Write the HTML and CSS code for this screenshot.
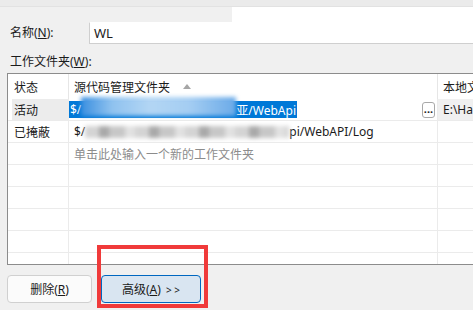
FILE: index.html
```html
<!DOCTYPE html>
<html lang="zh-CN">
<head>
  <meta charset="utf-8">
  <title>编辑工作区</title>
  <link rel="stylesheet" href="styles.css">
</head>
<body>
  <div class="dialog">
    <div class="band"></div>
    <div class="strip"><div class="strip-fill"></div></div>

    <div class="name-row">
      <label class="field-label">名称(<u>N</u>):</label>
      <div class="name-input">WL</div>
    </div>

    <div class="folder-label">工作文件夹(<u>W</u>):</div>

    <!-- 工作文件夹映射表 -->
    <div class="grid">
      <div class="row head">
        <div class="cell c1">状态</div>
        <div class="cell c2">源代码管理文件夹<span class="sort"></span></div>
        <div class="cell c3">本地文</div>
      </div>
      <div class="row">
        <div class="cell c1 current">活动</div>
        <div class="cell c2">
          <span class="picked">$/<span class="smudge smudge-blue"></span>亚/WebApi</span>
          <span class="more">···</span>
        </div>
        <div class="cell c3 shaded">E:\Ha</div>
      </div>
      <div class="row">
        <div class="cell c1">已掩蔽</div>
        <div class="cell c2">$/<span class="smudge smudge-grey"></span>pi/WebAPI/Log</div>
        <div class="cell c3"></div>
      </div>
      <div class="row">
        <div class="cell c1"></div>
        <div class="cell c2 hint">单击此处输入一个新的工作文件夹</div>
        <div class="cell c3"></div>
      </div>
      <div class="row"><div class="cell c1"></div><div class="cell c2"></div><div class="cell c3"></div></div>
      <div class="row"><div class="cell c1"></div><div class="cell c2"></div><div class="cell c3"></div></div>
      <div class="row"><div class="cell c1"></div><div class="cell c2"></div><div class="cell c3"></div></div>
      <div class="row"><div class="cell c1"></div><div class="cell c2"></div><div class="cell c3"></div></div>
      <div class="row"><div class="cell c1"></div><div class="cell c2"></div><div class="cell c3"></div></div>
    </div>

    <div class="actions">
      <button class="btn">删除(<u>R</u>)</button>
      <button class="btn btn-on">高级(<u>A</u>) <span class="arrows">&gt; &gt;</span></button>
    </div>

    <!-- cadre rouge d'annotation -->
    <div class="mark"></div>
  </div>
</body>
</html>
```

FILE: styles.css
```css
body {
  margin: 0;
  background: #f0f0f0;
  font-family: 'Noto Sans', 'Noto Sans CJK SC', sans-serif;
  font-size: 12px;
  color: #1b1b1b;
  overflow: hidden;
}

.dialog {
  position: relative;
  width: 473px;
  height: 310px;
  overflow: hidden;
}

.band {
  height: 6px;
  background: #ebebeb;
  border-bottom: 1px solid #e2e2e2;
}

.strip {
  display: flex;
  height: 15px;
}

.strip-fill {
  flex: 1;
  margin-left: 232px;
  background: #ffffff;
}

.name-row {
  display: flex;
  align-items: center;
  height: 22px;
}

.field-label {
  width: 89px;
  padding-left: 10px;
  box-sizing: border-box;
  line-height: 14px;
}

.name-input {
  flex: 1;
  height: 22px;
  box-sizing: border-box;
  margin-right: -20px;
  padding: 0 4px;
  background: #ffffff;
  border: 1px solid #cfcfcf;
  border-top-color: #ffffff;
  line-height: 20px;
  font-size: 13px;
}

.folder-label {
  margin-top: 11px;
  padding-left: 10px;
  line-height: 14px;
}

.grid {
  margin: 4px -20px 0 7px;
  height: 190px;
  background: #ffffff;
  border: 1px solid #8c8c8c;
  border-right: none;
  overflow: hidden;
}

.row {
  display: flex;
  height: 21px;
  border-bottom: 1px solid #ebebeb;
}

.row.head {
  height: 25px;
  border-bottom: none;
}

.cell {
  display: flex;
  align-items: center;
  box-sizing: border-box;
  white-space: nowrap;
  overflow: hidden;
}

.c1 {
  width: 61px;
  padding-left: 6px;
  border-right: 1px solid #ebebeb;
}

.c2 {
  width: 369px;
  padding-left: 5px;
  border-right: 1px solid #ebebeb;
}

.c3 {
  flex: 1;
  padding-left: 5px;
}

.head .c1,
.head .c2 {
  border-right-color: #e6e6e6;
}

.sort {
  width: 0;
  height: 0;
  margin-left: 13px;
  border-left: 4px solid transparent;
  border-right: 4px solid transparent;
  border-bottom: 5px solid #a6a6a6;
}

.current {
  background: linear-gradient(to right, #ffffff 4px, #ececec 4px);
  padding-left: 6px;
}

.row .c2:has(.picked) {
  padding-left: 0;
  overflow: visible;
}

.picked {
  display: flex;
  align-items: center;
  height: 17px;
  padding: 0 1px;
  background: #0078d7;
  color: #ffffff;
}

.more {
  margin-left: auto;
  margin-right: 2px;
  width: 13px;
  height: 16px;
  box-sizing: border-box;
  border: 1px solid #a8a8a8;
  border-radius: 3px;
  background: #ffffff;
  font-weight: bold;
  font-size: 11px;
  line-height: 18px;
  text-align: center;
  color: #222;
}

.shaded {
  background: #f0f0f0;
}

.hint {
  color: #8c8c8c;
}

.smudge {
  display: inline-block;
  height: 15px;
  filter: blur(2px);
}

.smudge-blue {
  width: 155px;
  height: 19px;
  margin-top: -6px;
  background: linear-gradient(to right, #3a8fe0, #8fc2ef 20%, #b3d6f4 45%, #a4cdf2 70%, #6aaae8);
}

.smudge-grey {
  width: 204px;
  height: 12px;
  background: repeating-linear-gradient(to right, #d4d4d4 0 14px, #a9a9a9 14px 24px, #c7c7c7 24px 40px, #e1e1e1 40px 50px);
}

.actions {
  display: flex;
  gap: 9px;
  margin-top: 10px;
  padding-left: 7px;
}

.btn {
  height: 28px;
  width: 85px;
  padding: 0;
  background: #fbfbfb;
  border: 1px solid #d0d0d0;
  border-radius: 4px;
  font-family: inherit;
  font-size: 12px;
  color: #1b1b1b;
}

.btn-on {
  width: 100px;
  background: #d9e5f1;
  border-color: #0067c0;
}

.arrows {
  margin-left: 2px;
  font-size: 10px;
}

.mark {
  position: absolute;
  left: 97px;
  top: 245px;
  width: 111px;
  height: 63px;
  box-sizing: border-box;
  border: 4px solid #f03a3a;
}
```
